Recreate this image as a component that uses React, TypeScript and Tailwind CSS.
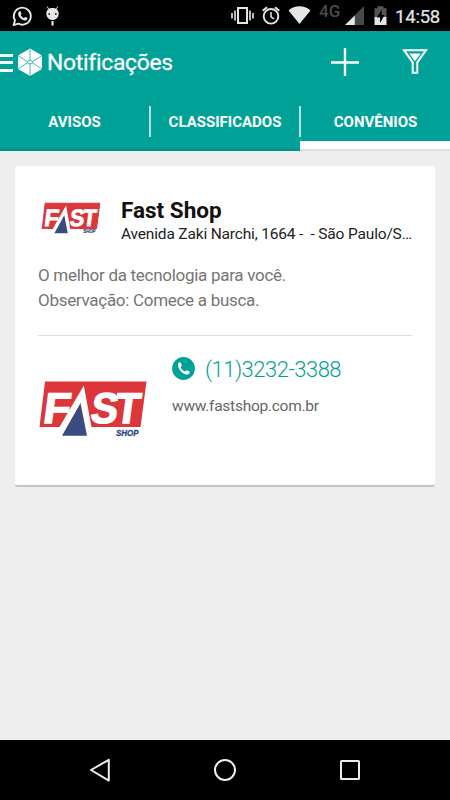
import React from "react";

function FastLogo({ className, rx }: { className: string; rx: number }) {
  return (
    <svg viewBox="0 0 108 56" preserveAspectRatio="none" className={className}>
      <path
        d="M6 0.5H107.5L101.5 46H0.5Z"
        fill="#dc363a"
        stroke="#dc363a"
        strokeWidth={rx}
        strokeLinejoin="round"
      />
      <path d="M44.8 4.5 20.5 46 21 57H50L52.5 46Z" fill="#fff" />
      <g
        transform="translate(5 42) skewX(-7.5)"
        fill="#fff"
        stroke="#fff"
        strokeWidth="1.4"
        fontFamily="'Liberation Sans', Arial, sans-serif"
        fontWeight="700"
        fontSize="43"
      >
        <text x="-2" y="0" textLength="27" lengthAdjust="spacingAndGlyphs">F</text>
        <text x="45.5" y="0" textLength="27" lengthAdjust="spacingAndGlyphs">S</text>
        <text x="69.5" y="0" textLength="25" lengthAdjust="spacingAndGlyphs">T</text>
      </g>
      <path d="M41.5 22 23 54.7H48Z" fill="#3b4b80" />
      <text
        x="77"
        y="55"
        fontFamily="'Liberation Sans', Arial, sans-serif"
        fontWeight="700"
        fontStyle="italic"
        fontSize="8.3"
        fill="#2d4585"
        stroke="#2d4585"
        strokeWidth="0.3"
        textLength="22.5"
        lengthAdjust="spacingAndGlyphs"
      >
        SHOP
      </text>
    </svg>
  );
}

function StatusBar() {
  return (
    <div className="flex h-[31px] shrink-0 items-start bg-black text-[#e6e6e6]">
      <svg width="66" height="31" viewBox="0 0 66 31" className="shrink-0">
        <path
          d="M13.6 25.1 15 20.5A8.5 8.5 0 1 1 18.4 23.7Z"
          fill="none"
          stroke="currentColor"
          strokeWidth="1.9"
          strokeLinejoin="round"
        />
        <path
          d="M19 11.7c.5-.6 1.5-.6 1.8 0l.7 1.7c.1.5-.9 1.2-.8 1.5.7 1.4 1.8 2.4 3.2 3 .4.1 1-1.1 1.5-1l1.8.9c.6.5-.2 2-1 2.4-3.4 1.4-8.5-3.7-8.1-6.5.1-.8.4-1.4.9-2Z"
          fill="currentColor"
        />
        <path d="M47.2 6.5 48.6 9M57.8 6.5 56.4 9" stroke="currentColor" strokeWidth="1" />
        <path
          d="M46.3 13.5C46.3 9.8 49 7.9 52.5 7.9s6.2 1.9 6.2 5.6c0 3.9-2.8 6.5-6.2 6.5s-6.2-2.6-6.2-6.5Z"
          fill="currentColor"
        />
        <circle cx="49.2" cy="14" r="0.9" fill="#222" />
        <circle cx="55.8" cy="14" r="0.9" fill="#222" />
        <path d="M52.5 21v4.5" stroke="currentColor" strokeWidth="2.2" />
      </svg>
      <div className="flex-1" />
      <svg width="82" height="31" viewBox="230 0 82 31" className="shrink-0">
        <g fill="none" stroke="currentColor" strokeWidth="2">
          <rect x="238" y="8" width="9" height="15" />
          <path d="M235 10.5v10M250 10.5v10" strokeWidth="1.6" />
          <path d="M232 13v5.5M253 13v5.5" strokeWidth="1.6" />
          <circle cx="271" cy="16.3" r="7.3" strokeWidth="1.9" />
          <path d="M271 12v4.8l3.2 2" strokeWidth="1.5" />
          <path d="M262.7 10.8 267 7.2M279.3 10.8 275 7.2" />
        </g>
        <path d="M288.5 10.4C295 5 303.8 5 310.5 10.4L299.5 24Z" fill="currentColor" />
      </svg>
      <span className="ml-[7px] mt-[2px] w-[26px] whitespace-nowrap font-[Roboto] text-[17px] font-medium leading-[19px] text-[#4a4a4a]">
        4G
      </span>
      <svg width="46" height="31" viewBox="345 0 46 31" className="shrink-0">
        <path d="M364 6V25H345Z" fill="#484848" />
        <path d="M354.8 15.5V25H345Z" fill="currentColor" />
        <path d="M374.5 8.2h3V6.3h6v1.9h3V17h-12Z" fill="#555" />
        <path d="M374.5 17h12v8h-12Z" fill="currentColor" />
        <path d="M381.7 9.5 376.8 17.6h3.2v5.4l4.600-8h-2.9Z" fill="#000" />
      </svg>
      <span className="ml-[4px] mt-[5px] w-[55px] whitespace-nowrap font-[Roboto] text-[18.5px] font-normal leading-[24px] tracking-[-0.2px] [-webkit-text-stroke:0.2px_#e6e6e6]">
        14:58
      </span>
    </div>
  );
}

function AppBar() {
  return (
    <header className="flex h-[61px] shrink-0 items-center bg-[#00a196] text-white">
      <svg width="43" height="30" viewBox="0 0 43 30" className="shrink-0">
        <path d="M0 8.5h13M0 15.5h13M0 23.5h13" stroke="#fff" strokeWidth="3" />
        <path d="M30 1.5 42 8.5V22L30 29 18 22V8.5Z" fill="#fff" />
        <path
          d="M30 1.5V13M30 17v12M18 8.5 28 15M42 8.5 32 15M18 22l10-6.500M42 22 32 15.5"
          stroke="#48b9b0"
          strokeWidth="1"
        />
        <ellipse cx="30" cy="15.2" rx="2.6" ry="1.7" fill="#fff" stroke="#48b9b0" />
      </svg>
      <h1 className="ml-[4px] mt-[2px] whitespace-nowrap font-[Roboto] text-[22.8px] font-normal leading-[30px] tracking-[-0.25px] [-webkit-text-stroke:0.3px_#fff]">
        Notificações
      </h1>
      <div className="flex-1" />
      <svg width="28" height="28" viewBox="331 47 28 28" className="shrink-0">
        <path d="M345 47v28M331 61.5h28" stroke="#fff" strokeWidth="2.4" />
      </svg>
      <svg width="26" height="28" viewBox="402 47 26 28" className="ml-[43px] mr-[22px] shrink-0">
        <path
          d="M404 49.2H426L417.3 61.3V71.7H412.7V61.3Z"
          fill="none"
          stroke="#fff"
          strokeWidth="2"
        />
        <path d="M409.2 52.5h11.600L415 60.3Z" fill="#fff" />
      </svg>
    </header>
  );
}

function Tabs() {
  const base =
    "flex items-center justify-center pt-px font-[Roboto] text-[15px] font-bold leading-[20px] text-white";
  return (
    <nav className="grid h-[59px] shrink-0 grid-cols-3 bg-[#00a196]">
      <div className="flex flex-col border-b-2 border-[#058e84] pt-[14px]">
        <div className={base + " h-[31px] border-r border-[#b5e0dc]"}>AVISOS</div>
      </div>
      <div className="flex flex-col border-b-2 border-[#058e84] pt-[14px]">
        <div className={base + " h-[31px] border-x border-[#b5e0dc]"}>CLASSIFICADOS</div>
      </div>
      <div className="flex flex-col pt-[14px]">
        <div className={base + " h-[31px] shrink-0 border-l border-[#b5e0dc]"}>CONVÊNIOS</div>
        <div className="mt-[4px] h-[8px] shrink-0 bg-white" />
        <div className="h-[2px] shrink-0 bg-[#dedede]" />
      </div>
    </nav>
  );
}

function PhoneIcon() {
  return (
    <svg width="23" height="23" viewBox="0 0 23 23" className="mb-[2px] shrink-0">
      <circle cx="11.5" cy="11.5" r="11.4" fill="#00a196" />
      <path
        d="M6.2 6.3c.8-1 2-1.3 2.6-.5l1 2.5c.2.9-1.2 1.6-1 2.2.8 1.9 2 3.1 3.9 3.9.8.2 1.5-1.5 2.4-1.2l2.2 1.2c.9.8.2 2.1-.8 2.8-4 2.3-12-5.3-10.3-10.9Z"
        fill="#fff"
      />
    </svg>
  );
}

export default function App() {
  return (
    <div className="flex h-[800px] w-[450px] flex-col overflow-hidden bg-[#eeeeee] font-[Roboto]">
      <StatusBar />
      <AppBar />
      <Tabs />
      <main className="flex-1 px-[15px] pt-[15px]">
        <article className="h-[321px] rounded-[3px] border-b-2 border-[#c4c4c4] bg-white px-[23px]">
          <div className="flex pt-[31px]">
            <FastLogo className="ml-[4px] mt-[6px] h-[31px] w-[58px] shrink-0 overflow-visible" rx={2} />
            <div className="ml-[21px] min-w-0 flex-1">
              <h2 className="whitespace-nowrap text-[22.5px] font-bold leading-[26px] text-[#111]">Fast Shop</h2>
              <p className="whitespace-pre text-[15.5px] leading-[22px] tracking-[-0.17px] text-[#222]">
                {"Avenida Zaki Narchi, 1664 -  - São Paulo/S…"}
              </p>
            </div>
          </div>
          <p className="mt-[18px] whitespace-nowrap text-[17px] leading-[25px] tracking-[-0.29px] text-[#757575]">
            O melhor da tecnologia para você.
            <br />
            Observação: Comece a busca.
          </p>
          <div className="mt-[22px] h-px bg-[#dedede]" />
          <div className="flex">
            <FastLogo className="ml-[1px] mt-[45px] h-[56px] w-[108px] shrink-0 overflow-visible" rx={0} />
            <div className="ml-[25px] pt-[19px]">
              <div className="flex items-center">
                <PhoneIcon />
                <span className="ml-[10px] mt-px whitespace-nowrap text-[22px] font-light leading-[28px] tracking-[-0.5px] text-[#00a196]">
                  (11)3232-3388
                </span>
              </div>
              <p className="mt-[12px] whitespace-nowrap text-[15.5px] leading-[20px] tracking-[-0.26px] text-[#666]">
                www.fastshop.com.br
              </p>
            </div>
          </div>
        </article>
      </main>
      <footer className="h-[60px] shrink-0 bg-black">
        <svg width="450" height="60" viewBox="0 0 450 60" fill="none" stroke="#eee" strokeWidth="2">
          <path d="M91 30 108.8 19.8V40.6Z" strokeLinejoin="round" />
          <circle cx="225" cy="30" r="10" />
          <rect x="341" y="21" width="18" height="18" rx="0.5" />
        </svg>
      </footer>
    </div>
  );
}
